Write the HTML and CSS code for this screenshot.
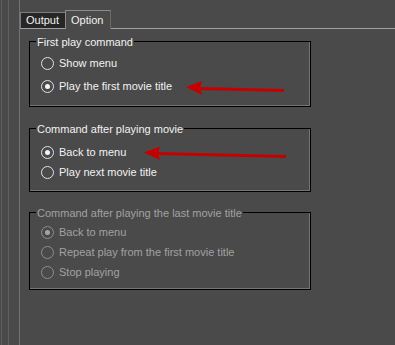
FILE: index.html
```html
<!DOCTYPE html>
<html lang="en">
<head>
    <meta charset="UTF-8">
    <title>Option</title>
    <link rel="stylesheet" href="styles.css">
</head>
<body>

    <div class="shell">
        <div class="shell-inner">
            <div class="dialog">
                <!-- Tab strip -->
                <div class="tabs">
                    <div class="tab">Output</div>
                    <div class="tab active">Option</div>
                </div>

                <!-- Option page -->
                <div class="panel">
                    <div class="group group-first">
                        <div class="group-title">First play command</div>
                        <div class="rows">
                            <div class="row"><span class="radio"></span>Show menu</div>
                            <div class="row"><span class="radio checked"></span>Play the first movie title</div>
                        </div>
                    </div>

                    <div class="group group-after">
                        <div class="group-title">Command after playing movie</div>
                        <div class="rows">
                            <div class="row"><span class="radio checked"></span>Back to menu</div>
                            <div class="row"><span class="radio"></span>Play next movie title</div>
                        </div>
                    </div>

                    <div class="group group-last disabled">
                        <div class="group-title">Command after playing the last movie title</div>
                        <div class="rows">
                            <div class="row"><span class="radio checked"></span>Back to menu</div>
                            <div class="row"><span class="radio"></span>Repeat play from the first movie title</div>
                            <div class="row"><span class="radio"></span>Stop playing</div>
                        </div>
                    </div>
                </div>
            </div>
        </div>
    </div>

    <!-- red annotation arrows drawn over the dialog -->
    <svg class="arrows" width="395" height="345" viewBox="0 0 395 345">
        <line x1="199" y1="88.5" x2="284" y2="90.5" stroke="#c40000" stroke-width="3"/>
        <polygon points="186,87 202,81 200,88 202,95" fill="#c40000"/>
        <line x1="157" y1="153.5" x2="286" y2="156.5" stroke="#c40000" stroke-width="3"/>
        <polygon points="144,152.5 160,146.5 158,153.5 160,160" fill="#c40000"/>
    </svg>

</body>
</html>
```

FILE: styles.css
```css
body, html {
    margin: 0;
    padding: 0;
    height: 100%;
    overflow: hidden;
}

body {
    background-color: #4a4a4a;
    font-family: "Liberation Sans", Arial, sans-serif;
    font-size: 11px;
    color: #f2f2f2;
    position: relative;
}

/* the three thin frame lines on the left (x = 1, 8, 19) */
.shell {
    margin-left: 1px;
    border-left: 1px solid #5f5f5f;
    padding-left: 6px;
    height: 100vh;
}

.shell-inner {
    border-left: 1px solid #5f5f5f;
    padding-left: 10px;
    height: 100%;
}

.dialog {
    border-left: 1px solid #727272;
    height: 100%;
}

/* Tabs */
.tabs {
    display: flex;
    align-items: flex-end;
    padding-top: 11px;
    height: 17px;
}

.tab {
    height: 15px;
    line-height: 15px;
    padding: 0 5px;
    border-top: 1px solid #7c7c7c;
    border-left: 1px solid #7c7c7c;
    background-color: #262626;
    width: 34px;
}

.tab.active {
    height: 18px;
    line-height: 19px;
    background-color: #4a4a4a;
    border-right: 1px solid #6a6a6a;
    border-left: 1px solid #8c8c8c;
    border-top: 1px solid #8c8c8c;
    position: relative;
    margin-bottom: -1px;
    z-index: 1;
}

.panel {
    border-top: 1px solid #a0a0a0;
    padding-left: 9px;
    padding-top: 12px;
}

/* Group boxes */
.group {
    width: 280px;
    border: 1px solid #000;
    box-shadow: inset -1px -1px 0 #747474;
}

.group-after {
    margin-top: 21px;
}

.group-last {
    margin-top: 20px;
}

.group-title {
    display: block;
    width: max-content;
    height: 14px;
    line-height: 14px;
    margin-top: -7px;
    margin-left: 6px;
    padding: 0 1px;
    background-color: #4a4a4a;
}

.rows {
    display: flex;
    flex-direction: column;
    padding-left: 11px;
}

.group-first .rows {
    padding-top: 4px;
    padding-bottom: 10px;
    gap: 3px;
}

.group-after .rows {
    padding-top: 6px;
    padding-bottom: 9px;
}

.group-last .rows {
    padding-top: 2px;
    padding-bottom: 7px;
}

.row {
    display: flex;
    align-items: center;
    height: 20px;
}

/* Radio buttons */
.radio {
    width: 11px;
    height: 11px;
    border: 1px solid #e2e2e2;
    border-radius: 50%;
    margin-right: 5px;
    display: flex;
    align-items: center;
    justify-content: center;
}

.radio.checked::after {
    content: "";
    width: 5px;
    height: 5px;
    border-radius: 50%;
    background-color: #f4f4f4;
}

.disabled {
    color: #a2a2a2;
}

.disabled .radio {
    border-color: #8e8e8e;
}

.disabled .radio.checked::after {
    background-color: #a4a4a4;
}

.arrows {
    position: absolute;
    left: 0;
    top: 0;
    pointer-events: none;
}
```
